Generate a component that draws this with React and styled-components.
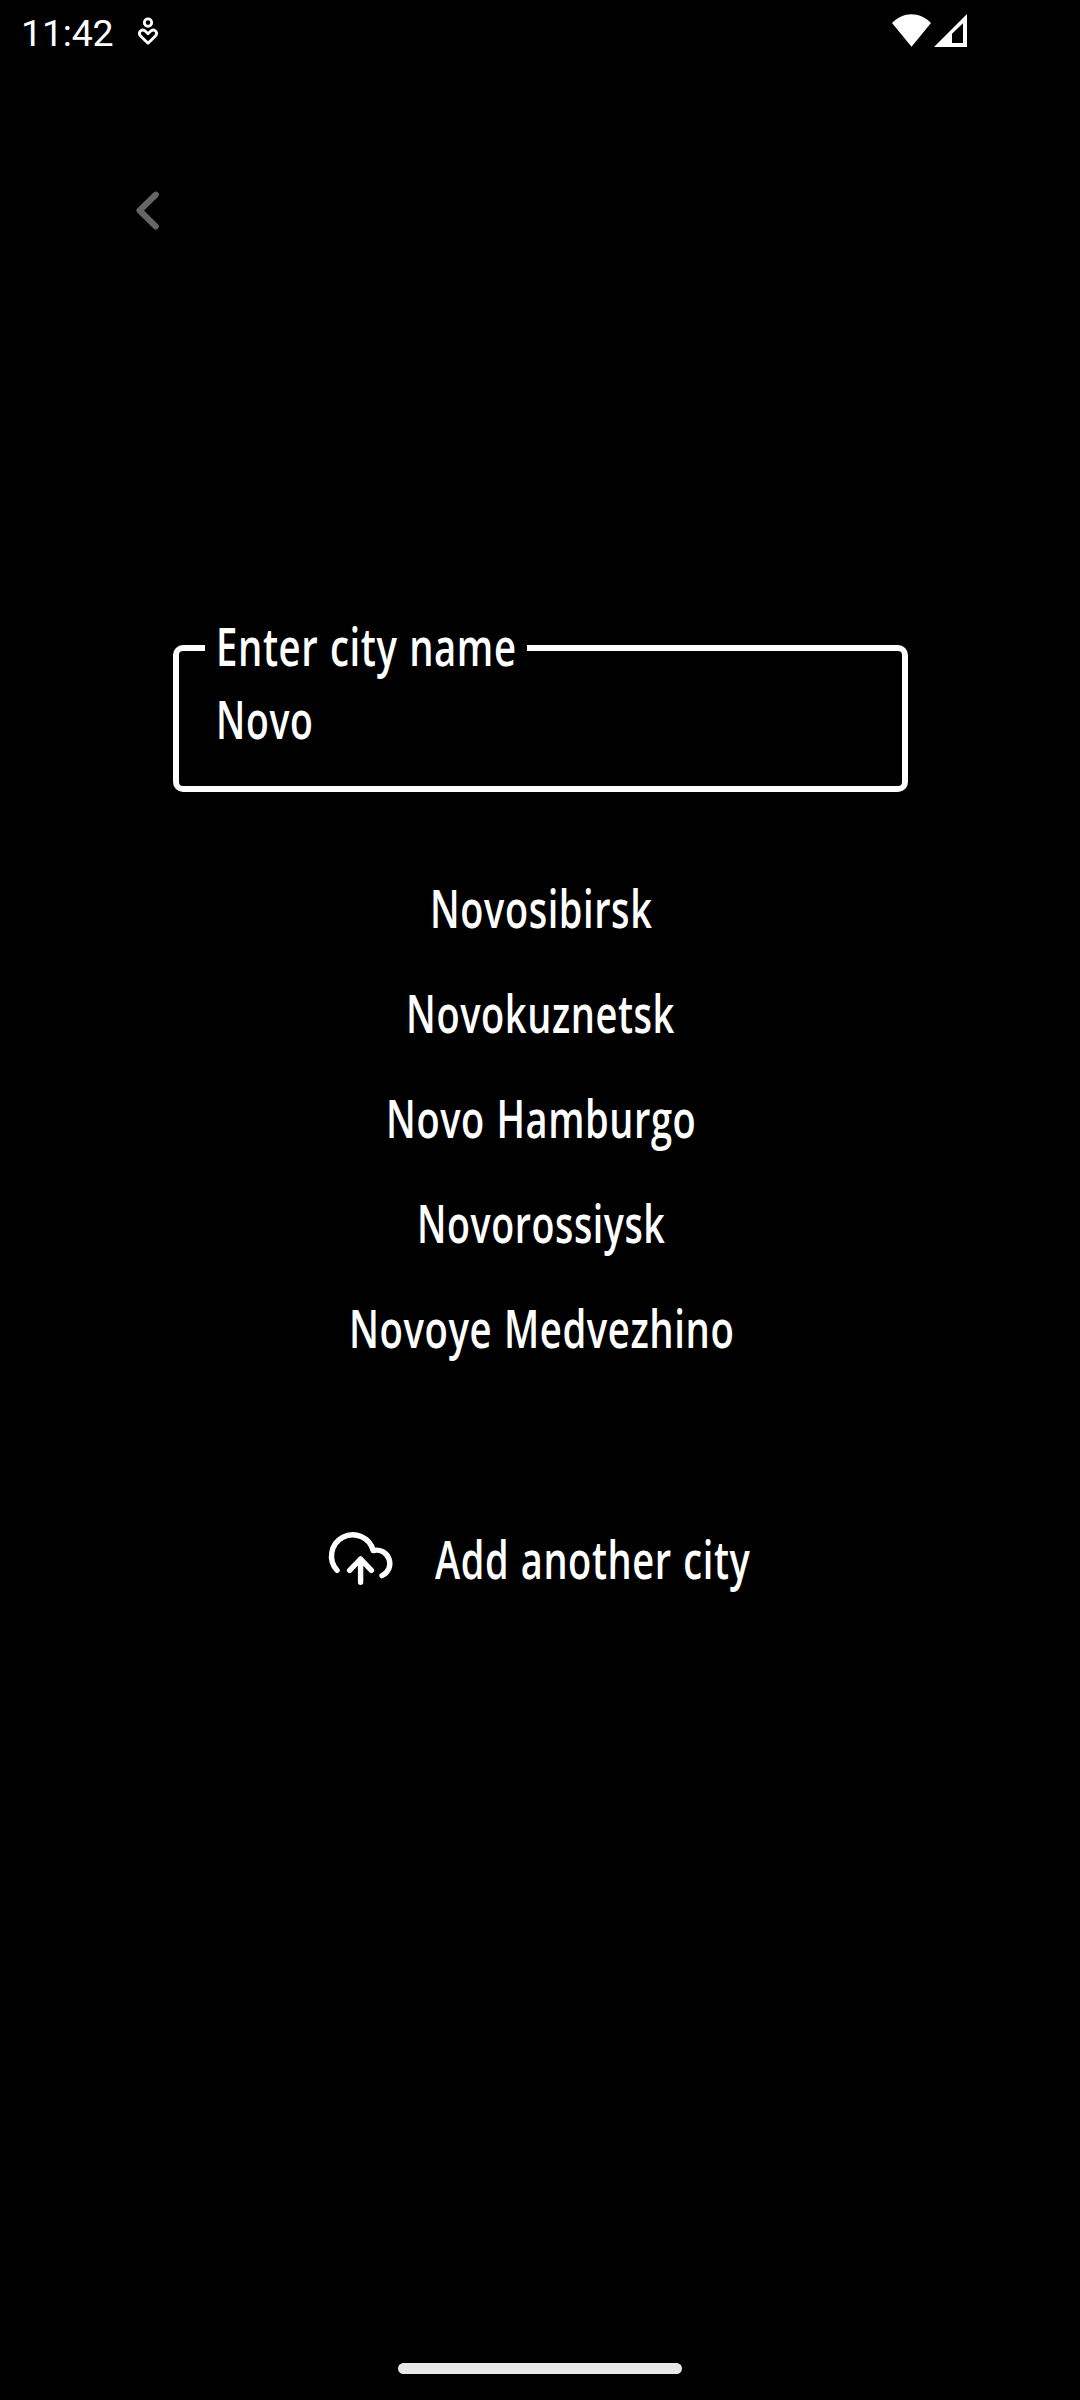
import React, { useLayoutEffect, useRef, useState } from "react";
import styled, { createGlobalStyle } from "styled-components";

const GlobalStyle = createGlobalStyle`
  body {
    margin: 0;
    background: #000;
    color: #fff;
  }
  *, *::before, *::after { box-sizing: border-box; }
`;

const Screen = styled.main`
  width: 1080px;
  height: 2400px;
  display: flex;
  flex-direction: column;
  overflow: hidden;
  background: #000;
`;

const StatusBar = styled.header`
  height: 66px;
  padding: 0 112px 0 21px;
  display: flex;
  align-items: flex-start;
  justify-content: space-between;
`;

const StatusGroup = styled.div`
  display: flex;
  align-items: flex-start;
`;

const Clock = styled.span`
  width: 115px;
  font: 400 37.5px/66px Roboto, sans-serif;
  letter-spacing: -0.2px;
`;

const Icon = styled.svg`
  display: block;
  flex: none;
  width: ${(p) => p.$w}px;
  height: ${(p) => p.$h}px;
`;

const TopNav = styled.nav`
  height: 579px;
  padding: 114px 0 0 120px;
`;

const BackButton = styled.button`
  display: block;
  padding: 0;
  border: 0;
  background: none;
  color: #666;
`;

const Field = styled.fieldset`
  position: relative;
  width: 735px;
  height: 147px;
  margin: 0 0 0 173px;
  padding: 30px 0 0 40px;
  border: 6px solid #fff;
  border-radius: 10px;
`;

const FieldLabel = styled.div`
  position: absolute;
  left: 26px;
  top: -43px;
  width: 322px;
  height: 76px;
  padding-left: 14px;
  background: #000;
`;

const FieldValue = styled.div`
  height: 76px;
`;

const CityList = styled.ul`
  list-style: none;
  margin: 63px 0 0;
  padding: 0;
`;

const CityRow = styled.li`
  height: 105px;
  padding-left: 4px;
  display: flex;
  align-items: center;
  justify-content: center;
`;

const AddCity = styled.button`
  display: flex;
  align-items: center;
  width: 430px;
  height: 76px;
  margin: 141px 0 0 325px;
  padding: 0;
  border: 0;
  background: none;
  color: #fff;
`;

const HomeArea = styled.footer`
  margin-top: auto;
  height: 37px;
  display: flex;
  justify-content: center;
`;

const HomeBar = styled.div`
  width: 284px;
  height: 11px;
  border-radius: 5.5px;
  background: #e8e8e8;
`;

const TextBox = styled.span`
  display: block;
  flex: none;
  width: ${(p) => p.$width}px;
  height: 76px;
  margin-left: ${(p) => p.$gap || 0}px;
`;

const Glyphs = styled.span`
  display: inline-block;
  white-space: pre;
  font: 560 52px/76px "Open Sans", "Noto Sans", sans-serif;
  letter-spacing: 0.8px;
  word-spacing: 1.5px;
  transform-origin: 0 50%;
`;

/* Condenses a line so that its visible glyphs span exactly the given width. */
function Condensed({ width, gap, children }) {
  const ref = useRef(null);
  const [transform, setTransform] = useState("none");
  useLayoutEffect(() => {
    const css = getComputedStyle(ref.current);
    const ctx = document.createElement("canvas").getContext("2d");
    ctx.font = `${css.fontWeight} ${css.fontSize} ${css.fontFamily}`;
    ctx.letterSpacing = css.letterSpacing;
    ctx.wordSpacing = css.wordSpacing;
    const m = ctx.measureText(children);
    const scale = width / (m.actualBoundingBoxLeft + m.actualBoundingBoxRight);
    setTransform(`translateX(${m.actualBoundingBoxLeft * scale}px) scaleX(${scale})`);
  }, [children, width]);
  return (
    <TextBox $width={width} $gap={gap}>
      <Glyphs ref={ref} style={{ transform }}>{children}</Glyphs>
    </TextBox>
  );
}

const cities = [
  { name: "Novosibirsk", width: 219 },
  { name: "Novokuznetsk", width: 265.5 },
  { name: "Novo Hamburgo", width: 305.5 },
  { name: "Novorossiysk", width: 245 },
  { name: "Novoye Medvezhino", width: 380.5 },
];

export default function App() {
  return (
    <>
      <GlobalStyle />
      <Screen>
        <StatusBar>
          <StatusGroup>
            <Clock>11:42</Clock>
            <Icon $w={24} $h={66} viewBox="136 0 24 66" fill="none" stroke="#fff" strokeWidth="2.8">
              <circle cx="148" cy="22.6" r="3.7" />
              <path d="M148 43.3 L140.8 36.3 C137.3 32.5 141.5 28.2 145.2 31 L148 33.7 L150.8 31 C154.5 28.2 158.7 32.5 155.2 36.3 Z" strokeLinejoin="round" />
            </Icon>
          </StatusGroup>
          <Icon $w={78} $h={66} viewBox="890 0 78 66" fill="#fff">
            <path d="M892 23 C903 11.3 920 11.3 931 23 L911.5 46.7 Z" />
            <path fillRule="evenodd" d="M934 47 L967 14 V47 Z M952 43.1 H963 V23.2 L952 33.8 Z" />
          </Icon>
        </StatusBar>
        <TopNav>
          <BackButton aria-label="Back">
            <Icon $w={50} $h={60} viewBox="120 180 50 60" fill="none" stroke="currentColor" strokeWidth="6.2" strokeLinecap="round" strokeLinejoin="round">
              <path d="M155.7 194.7 L139.6 210.5 L155.7 226.4" />
            </Icon>
          </BackButton>
        </TopNav>
        <Field>
          <FieldLabel>
            <Condensed width={295.5}>Enter city name</Condensed>
          </FieldLabel>
          <FieldValue>
            <Condensed width={92.5}>Novo</Condensed>
          </FieldValue>
        </Field>
        <CityList>
          {cities.map((c) => (
            <CityRow key={c.name}>
              <Condensed width={c.width}>{c.name}</Condensed>
            </CityRow>
          ))}
        </CityList>
        <AddCity>
          <Icon $w={72} $h={76} viewBox="325 1521 72 76" fill="none" stroke="currentColor" strokeWidth="5.4" strokeLinecap="round" strokeLinejoin="round">
            <path d="M337 1570.3 A21.2 21.2 0 1 1 373.2 1550.6 A13.3 13.3 0 0 1 382 1575.6" />
            <path d="M349.6 1570.4 L360.6 1559 L371.4 1570.4 M360.6 1559 V1582.2" />
          </Icon>
          <Condensed width={315} gap={38}>Add another city</Condensed>
        </AddCity>
        <HomeArea>
          <HomeBar />
        </HomeArea>
      </Screen>
    </>
  );
}
